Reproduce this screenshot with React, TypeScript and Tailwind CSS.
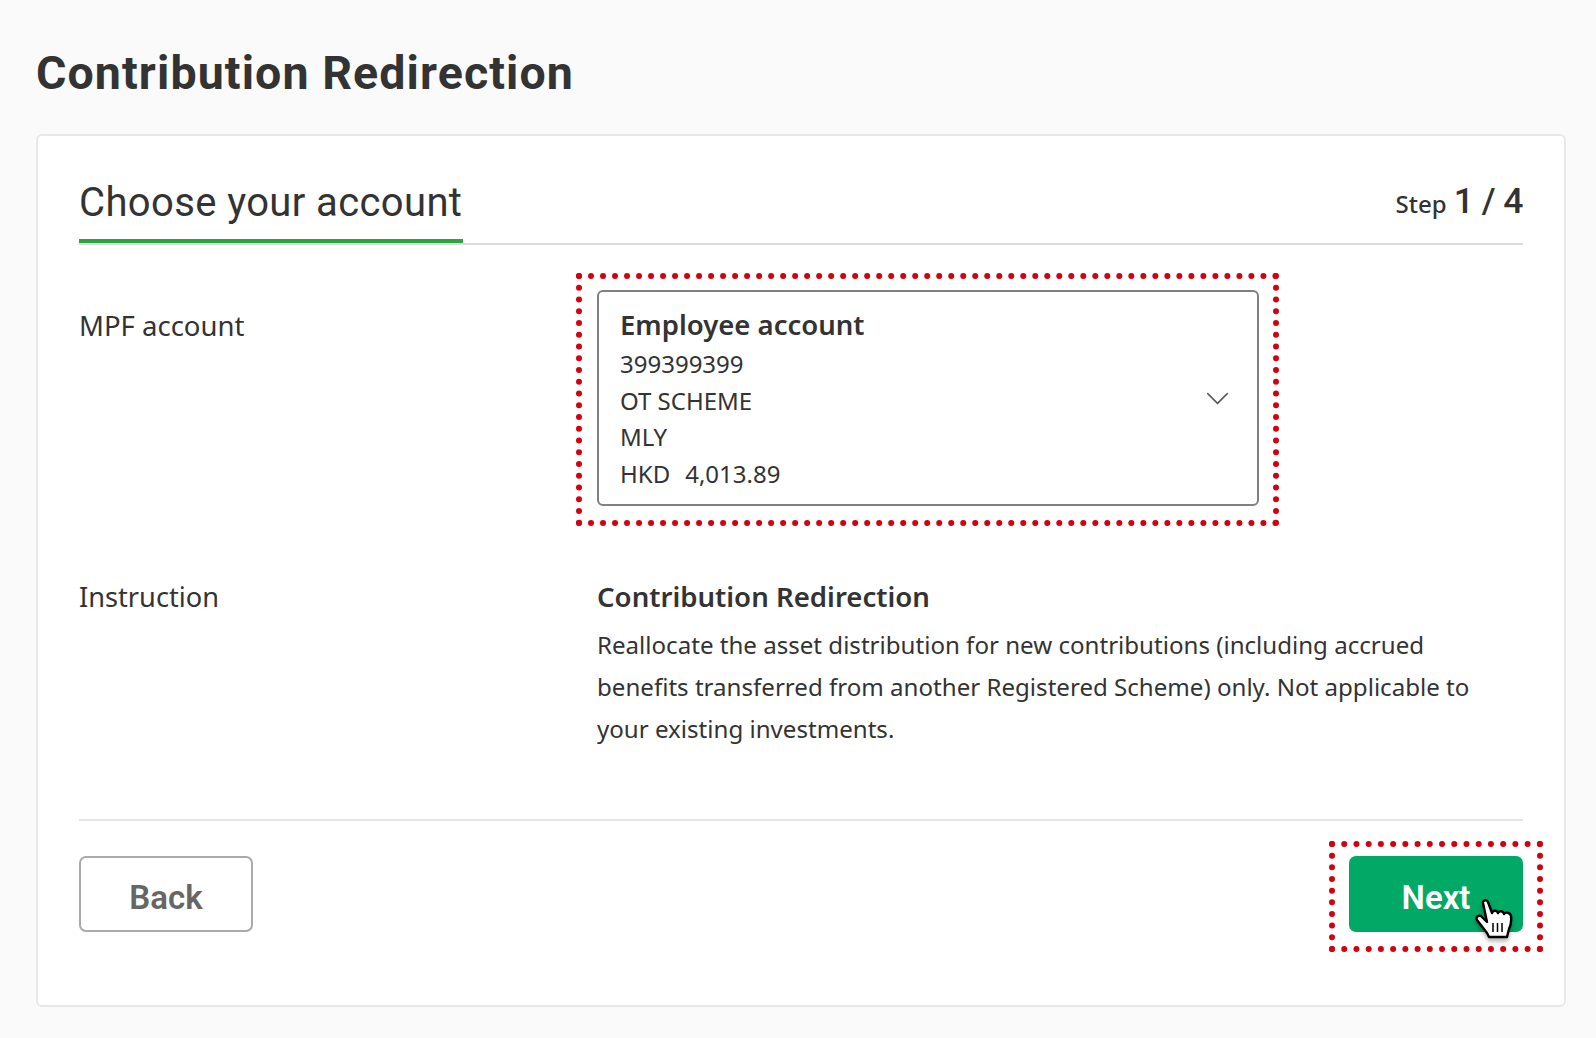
import { ChevronDown } from "lucide-react";

const din = "font-['Roboto',sans-serif]";

function DottedBox({ className }: { className: string }) {
  return <div className={`pointer-events-none absolute border-[6px] border-dotted border-[#d4000f] ${className}`} />;
}

function HandCursor() {
  return (
    <svg viewBox="0 0 38 41" className="absolute left-[126px] top-[43px] h-[41px] w-[38px] drop-shadow-[0_3px_2px_rgba(0,0,0,0.3)]">
      <path
        d="M8 4C7.500 1 12 .5 13 3l4 11c1-3 5-3 6 0 1-2.500 5-2.500 6 1 1-2 6-2 7 2 .5 4 0 9-2 13l-2 8H14l-2-4L2 21c-1.500-3 1-5 4-4l6 6z"
        fill="#fff"
        stroke="#000"
        strokeWidth="2.400"
        strokeLinejoin="round"
      />
      <path d="M18 24v9M22.500 24v9M27 24v9" stroke="#000" strokeWidth="1.500" fill="none" />
    </svg>
  );
}

export default function App() {
  return (
    <div className="min-h-[1038px] bg-[#fafafa] px-[36px] pb-[30px] font-['Noto_Sans',sans-serif] text-[#333]">
      <h1 className={`flex h-[134px] items-center pt-[13px] text-[46.500px] font-bold tracking-[1.100px] text-[#333] ${din}`}>
        Contribution Redirection
      </h1>

      <div className="h-[873px] w-[1530px] rounded-[6px] border-2 border-[#e8e8e8] bg-white px-[41px] pt-[31px]">
        <div className="flex h-[78px] items-end justify-between border-b-2 border-[#dcdcdc]">
          <h2 className={`flex h-[76px] w-[384px] items-center border-b-4 border-[#2ba53f] text-[40px] font-normal tracking-[0.380px] ${din}`}>
            Choose your account
          </h2>
          <div className="mb-[15px] flex items-baseline gap-[7px] font-medium">
            <span className="text-[24px]">Step</span>
            <span className={`text-[35.500px] font-medium tracking-[-0.500px] ${din}`}>1 / 4</span>
          </div>
        </div>

        <div className="mt-[45px] grid grid-cols-[518px_1fr]">
          <div className="pt-[16px] text-[27.500px] leading-[40px]">MPF account</div>
          <div className="relative h-[216px] w-[662px]">
            <DottedBox className="-bottom-[20px] -left-[21px] -right-[20px] -top-[17px]" />
            <div className="flex h-full items-center justify-between rounded-[6px] border-2 border-[#808080] pl-[21px] pr-[20px]">
              <div className="pt-[3px] text-[24px] leading-[36.600px]">
                <div className="mb-[3px] text-[27.500px] font-semibold">Employee account</div>
                <div>399399399</div>
                <div>OT SCHEME</div>
                <div>MLY</div>
                <div className="flex gap-[15px]">
                  <span>HKD</span>
                  <span>4,013.89</span>
                </div>
              </div>
              <ChevronDown className="size-[39px] text-[#555]" strokeWidth={0.900} />
            </div>
          </div>
        </div>

        <div className="mt-[71px] grid grid-cols-[518px_1fr]">
          <div className="text-[27.200px] leading-[40px]">Instruction</div>
          <div>
            <div className="text-[27.600px] font-semibold leading-[38px]">Contribution Redirection</div>
            <p className="mt-[9px] text-[24.100px] leading-[42px]">
              Reallocate the asset distribution for new contributions (including accrued
              <br />
              benefits transferred from another Registered Scheme) only. Not applicable to
              <br />
              your existing investments.
            </p>
          </div>
        </div>

        <div className="mt-[69px] flex justify-between border-t-2 border-[#e6e6e6] pt-[35px]">
          <button className={`h-[76px] w-[174px] rounded-[7px] border-2 border-[#aaa] pt-[8px] text-[33px] font-semibold text-[#666] ${din}`}>Back</button>
          <div className="relative">
            <DottedBox className="-bottom-[20px] -left-[20px] -right-[20px] -top-[15px]" />
            <button className={`h-[76px] w-[174px] rounded-[7px] bg-[#02a866] pt-[8px] text-[33px] font-semibold text-white ${din}`}>Next</button>
            <HandCursor />
          </div>
        </div>
      </div>
    </div>
  );
}
